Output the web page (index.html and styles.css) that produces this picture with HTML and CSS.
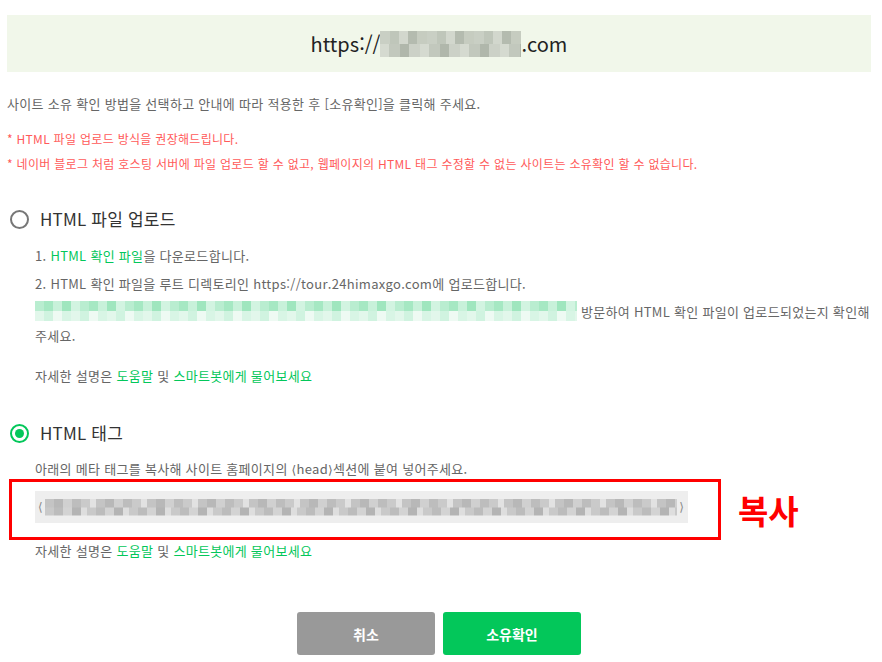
FILE: index.html
```html
<!DOCTYPE html>
<html lang="ko">
<head>
    <meta charset="UTF-8">
    <meta name="viewport" content="width=device-width, initial-scale=1.0">
    <title>사이트 소유확인</title>
    <link rel="stylesheet" href="styles.css">
</head>
<body>
    <div class="page">
        <div class="site-url">https://<span class="blur blur-url"></span>.com</div>

        <p class="guide">사이트 소유 확인 방법을 선택하고 안내에 따라 적용한 후 [소유확인]을 클릭해 주세요.</p>
        <ul class="notice">
            <li>* HTML 파일 업로드 방식을 권장해드립니다.</li>
            <li>* 네이버 블로그 처럼 호스팅 서버에 파일 업로드 할 수 없고, 웹페이지의 HTML 태그 수정할 수 없는 사이트는 소유확인 할 수 없습니다.</li>
        </ul>

        <section class="method">
            <label class="method-title"><span class="radio"></span>HTML 파일 업로드</label>
            <ol class="steps">
                <li>1. <a href="#" class="link">HTML 확인 파일</a>을 다운로드합니다.</li>
                <li>2. HTML 확인 파일을 루트 디렉토리인 https://tour.24himaxgo.com에 업로드합니다.</li>
                <li><span class="blur blur-link"></span> 방문하여 HTML 확인 파일이 업로드되었는지 확인해 주세요.</li>
            </ol>
            <p class="help">자세한 설명은 <a href="#" class="link">도움말</a> 및 <a href="#" class="link">스마트봇에게 물어보세요</a></p>
        </section>

        <section class="method method-tag">
            <label class="method-title"><span class="radio checked"></span>HTML 태그</label>
            <p class="desc">아래의 메타 태그를 복사해 사이트 홈페이지의 <span class="bracket">⟨</span>head<span class="bracket">⟩</span>섹션에 붙여 넣어주세요.</p>
            <div class="copy-area">
                <div class="copy-frame">
                    <div class="meta-box"><span class="bracket">⟨</span><span class="blur blur-meta"></span><span class="bracket">⟩</span></div>
                </div>
                <span class="copy-label">복사</span>
            </div>
            <p class="help help-tag">자세한 설명은 <a href="#" class="link">도움말</a> 및 <a href="#" class="link">스마트봇에게 물어보세요</a></p>
        </section>

        <div class="buttons">
            <button class="btn btn-cancel">취소</button>
            <button class="btn btn-confirm">소유확인</button>
        </div>
    </div>
</body>
</html>
```

FILE: styles.css
```css
:root {
    --green: #03c75a;
    --red-text: #ff5a5a;
    --text: #666666;
    --title: #333333;
}

body {
    margin: 0;
    font-family: "Noto Sans CJK KR", "Noto Sans", sans-serif;
    background: #ffffff;
    color: var(--text);
}

.page {
    padding: 15px 11px 0 7px;
}

.site-url {
    display: flex;
    align-items: center;
    justify-content: center;
    height: 57px;
    background-color: #f1f7ea;
    font-size: 20px;
    color: #222222;
}

.blur {
    display: inline-block;
    vertical-align: middle;
}

.blur-url {
    width: 141px;
    height: 26px;
    background:
        repeating-linear-gradient(90deg, #c9cfc4 0 10px, #bfc6ba 10px 19px, #d2d7cd 19px 28px, #b4bbaf 28px 37px, #c6ccc0 37px 47px) top / 100% 50% no-repeat,
        repeating-linear-gradient(90deg, #d5dad0 0 9px, #c2c8bd 9px 20px, #b0b7ab 20px 29px, #ccd1c7 29px 40px) bottom / 100% 50% no-repeat;
}

.guide {
    margin: 22px 0 0;
    font-size: 13px;
    line-height: 20px;
    letter-spacing: 0.3px;
}

.notice {
    list-style: none;
    margin: 12px 0 0;
    padding: 0;
    font-size: 12px;
    line-height: 25px;
    letter-spacing: 0.3px;
    color: var(--red-text);
}

.method {
    margin-top: 31px;
}

.method-tag {
    margin-top: 33px;
}

.method-title {
    display: flex;
    align-items: center;
    gap: 11px;
    padding-left: 3px;
    font-size: 17px;
    line-height: 24px;
    letter-spacing: 0.2px;
    color: var(--title);
}

.radio {
    display: flex;
    align-items: center;
    justify-content: center;
    width: 15px;
    height: 15px;
    border: 2px solid #777777;
    border-radius: 50%;
}

.radio.checked {
    border-color: var(--green);
}

.radio.checked::after {
    content: "";
    width: 9px;
    height: 9px;
    border-radius: 50%;
    background-color: var(--green);
}

.steps {
    list-style: none;
    margin: 13px 0 0;
    padding: 0 0 0 28px;
    font-size: 13px;
    line-height: 24px;
    letter-spacing: 0.3px;
}

.steps li {
    margin-bottom: 4px;
}

.steps li:last-child {
    margin-bottom: 0;
}

.blur-link {
    width: 542px;
    height: 20px;
    vertical-align: -4px;
    background:
        repeating-linear-gradient(90deg, #b9edd0 0 9px, #a6e8c3 9px 18px, #c8f1da 18px 27px, #9fe6be 27px 36px, #d2f4e1 36px 45px) top / 100% 50% no-repeat,
        repeating-linear-gradient(90deg, #e2f7eb 0 9px, #d0f3e0 9px 18px, #eefaf3 18px 27px, #d8f5e5 27px 36px) bottom / 100% 50% no-repeat;
}

.link {
    color: var(--green);
    text-decoration: none;
}

.bracket {
    font-family: "DejaVu Sans", sans-serif;
    font-size: 12px;
}

.help {
    margin: 16px 0 0;
    padding-left: 28px;
    font-size: 13px;
    line-height: 24px;
    letter-spacing: 0.3px;
}

.desc {
    margin: 15px 0 0;
    padding-left: 28px;
    font-size: 13px;
    line-height: 18px;
    letter-spacing: 0.3px;
}

.copy-area {
    display: flex;
    align-items: center;
    gap: 17px;
    margin-left: 2px;
}

.copy-frame {
    width: 653px;
    padding: 9px 30px 14px 23px;
    border: 3px solid #ff0000;
}

.meta-box {
    display: flex;
    align-items: center;
    gap: 2px;
    height: 32px;
    padding: 0 4px 0 3px;
    background-color: #eeeeee;
    color: #888888;
}

.blur-meta {
    flex: 1;
    height: 17px;
    background:
        repeating-linear-gradient(90deg, #c4c4c4 0 9px, #b8b8b8 9px 18px, #d0d0d0 18px 27px, #bdbdbd 27px 36px, #cacaca 36px 45px, #e2e2e2 45px 51px) top / 100% 50% no-repeat,
        repeating-linear-gradient(90deg, #c9c9c9 0 9px, #bcbcbc 9px 18px, #d3d3d3 18px 27px, #b4b4b4 27px 36px, #dedede 36px 42px) bottom / 100% 50% no-repeat;
}

.copy-label {
    font-size: 33px;
    font-weight: 700;
    color: #ff0000;
}

.help-tag {
    margin-top: 0;
    line-height: 22px;
}

.buttons {
    display: flex;
    justify-content: center;
    gap: 8px;
    margin-top: 50px;
}

.btn {
    width: 138px;
    height: 43px;
    border: none;
    border-radius: 3px;
    font-family: inherit;
    font-size: 14px;
    font-weight: 700;
    color: #ffffff;
    cursor: pointer;
}

.btn-cancel {
    background-color: #999999;
}

.btn-confirm {
    background-color: var(--green);
}
```
